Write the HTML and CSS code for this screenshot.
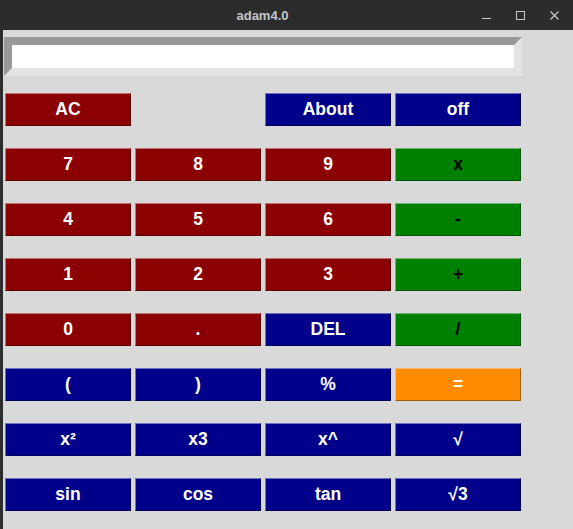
FILE: index.html
```html
<!DOCTYPE html>
<html>
<head>
<meta charset="utf-8">
<title>adam4.0</title>
<link rel="stylesheet" href="styles.css">
</head>
<body>
<div class="window">
  <div class="titlebar">
    <div class="title">adam4.0</div>
    <div class="controls">
      <svg class="ctl" width="9" height="9" viewBox="0 0 9 9"><line x1="0" y1="7.5" x2="9" y2="7.5" stroke="#c9c9c9" stroke-width="1"/></svg>
      <svg class="ctl" width="9" height="9" viewBox="0 0 9 9"><rect x="0.5" y="0.5" width="8" height="8" fill="none" stroke="#c9c9c9" stroke-width="1"/></svg>
      <svg class="ctl" width="9" height="9" viewBox="0 0 9 9"><path d="M0.5 0.5 L8.5 8.5 M8.5 0.5 L0.5 8.5" stroke="#c9c9c9" stroke-width="1.2"/></svg>
    </div>
  </div>
  <div class="content">
    <div class="entry"><div class="entry-field"></div></div>
    <div class="keys">
      <button class="key red">AC</button>
      <span class="blank"></span>
      <button class="key blue">About</button>
      <button class="key blue">off</button>

      <button class="key red">7</button>
      <button class="key red">8</button>
      <button class="key red">9</button>
      <button class="key green">x</button>

      <button class="key red">4</button>
      <button class="key red">5</button>
      <button class="key red">6</button>
      <button class="key green">-</button>

      <button class="key red">1</button>
      <button class="key red">2</button>
      <button class="key red">3</button>
      <button class="key green">+</button>

      <button class="key red">0</button>
      <button class="key red">.</button>
      <button class="key blue">DEL</button>
      <button class="key green">/</button>

      <button class="key blue">(</button>
      <button class="key blue">)</button>
      <button class="key blue">%</button>
      <button class="key orange">=</button>

      <button class="key blue">x²</button>
      <button class="key blue">x3</button>
      <button class="key blue">x^</button>
      <button class="key blue">√</button>

      <button class="key blue">sin</button>
      <button class="key blue">cos</button>
      <button class="key blue">tan</button>
      <button class="key blue">√3</button>
    </div>
  </div>
</div>
</body>
</html>
```

FILE: styles.css
```css
html, body {
  margin: 0;
  padding: 0;
  background: #d9d9d9;
}
.window {
  width: 573px;
  height: 529px;
  display: flex;
  flex-direction: column;
  overflow: hidden;
}
.titlebar {
  height: 30px;
  background: #2c2c2c;
  display: flex;
  align-items: center;
  flex: none;
}
.title {
  flex: 1;
  padding-left: 43px;
  text-align: center;
  font-family: "Liberation Sans", Arial, sans-serif;
  font-weight: bold;
  font-size: 13px;
  color: #c3c6ca;
}
.controls {
  display: flex;
  gap: 25px;
  padding-right: 14px;
  align-items: center;
}
.ctl {
  display: block;
}
.content {
  flex: 1;
  border-left: 3px solid #2c2c2c;
  background: #d9d9d9;
  padding: 7px 0 0 1px;
}
.entry {
  width: 502px;
  height: 23px;
  border: 8px solid;
  border-color: #999999 #e3e3e3 #e3e3e3 #999999;
  background: #ffffff;
}
.keys {
  margin-top: 17px;
  margin-left: 1px;
  display: grid;
  grid-template-columns: repeat(4, 126px);
  grid-auto-rows: 33px;
  column-gap: 4px;
  row-gap: 22px;
}
.key {
  margin: 0;
  padding: 0;
  box-sizing: border-box;
  border: 1px solid;
  font-family: "Liberation Sans", Arial, sans-serif;
  font-weight: bold;
  font-size: 17.5px;
  color: #ffffff;
  display: flex;
  align-items: center;
  justify-content: center;
  line-height: 1;
}
.red {
  background: #8b0000;
  border-color: #c07070 #5c0000 #5c0000 #c07070;
}
.blue {
  background: #00008b;
  border-color: #6f6fc0 #00005c #00005c #6f6fc0;
}
.green {
  background: #008000;
  border-color: #70b870 #005400 #005400 #70b870;
  color: #000000;
}
.orange {
  background: #ff8c00;
  border-color: #ffbb70 #a85c00 #a85c00 #ffbb70;
}
```
